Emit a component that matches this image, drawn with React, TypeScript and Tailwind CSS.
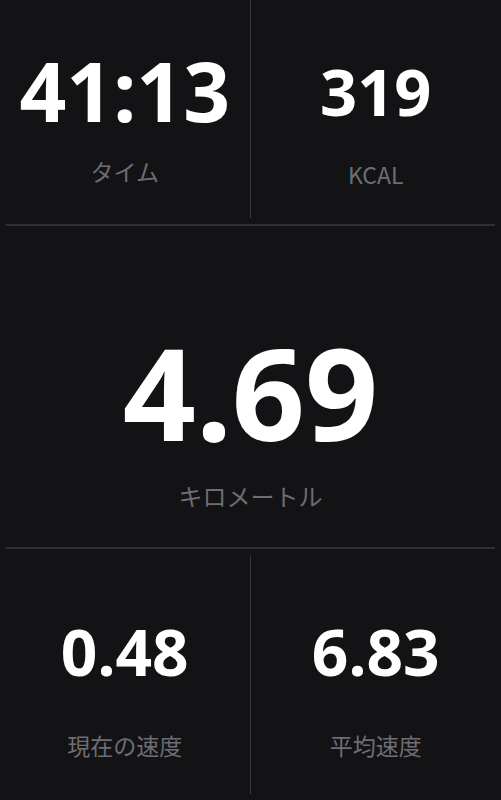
const numFont = { fontFamily: '"Noto Sans", "Open Sans", sans-serif' };

function Label({ text, className = "" }: { text: string; className?: string }) {
  return (
    <div
      className={`leading-none text-[#6d6d73] font-['Noto_Sans_CJK_JP',sans-serif] ${className}`}
    >
      {text}
    </div>
  );
}

export default function App() {
  return (
    <div className="w-[501px] h-[800px] bg-[#131316] flex flex-col font-['Noto_Sans',sans-serif]">
      {/* top row */}
      <div className="grid grid-cols-2 h-[218px]">
        <div className="flex flex-col items-center pt-[49px] border-r border-[#36363b]">
          <div className="text-[82px] leading-none font-bold text-white" style={numFont}>41:13</div>
          <Label text="タイム" className="text-[23px] mt-[29px]" />
        </div>
        <div className="flex flex-col items-center pt-[59px]">
          <div className="text-[65px] leading-none font-bold text-white" style={numFont}>319</div>
          <Label text="KCAL" className="text-[23px] mt-[39px]" />
        </div>
      </div>

      <div className="mx-[6px] mt-[6px] h-[2px] bg-[#2f2f34]" />

      {/* distance */}
      <div className="h-[321px] flex flex-col items-center pt-[102px]">
        <div className="text-[128px] leading-none font-bold text-white" style={numFont}>4.69</div>
        <Label text="キロメートル" className="text-[24px] mt-[28px]" />
      </div>

      <div className="mx-[6px] h-[2px] bg-[#2f2f34]" />

      {/* speed row */}
      <div className="grid grid-cols-2 mt-[6px] h-[239px]">
        <div className="flex flex-col items-center pt-[65px] border-r border-[#36363b]">
          <div className="text-[64px] leading-none font-bold text-white" style={numFont}>0.48</div>
          <Label text="現在の速度" className="text-[23px] mt-[50px]" />
        </div>
        <div className="flex flex-col items-center pt-[65px]">
          <div className="text-[64px] leading-none font-bold text-white" style={numFont}>6.83</div>
          <Label text="平均速度" className="text-[23px] mt-[50px]" />
        </div>
      </div>
    </div>
  );
}
